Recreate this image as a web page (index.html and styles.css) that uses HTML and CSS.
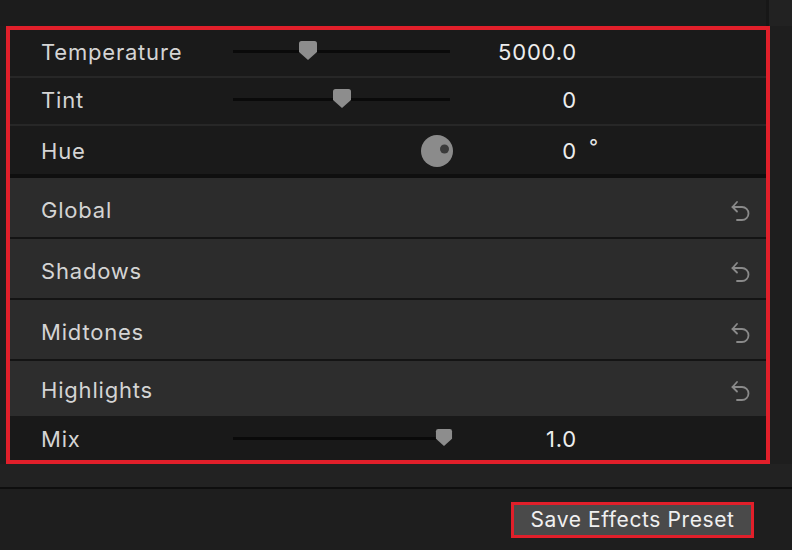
FILE: index.html
```html
<!DOCTYPE html>
<html>
<head>
<meta charset="utf-8">
<link rel="stylesheet" href="styles.css">
</head>
<body>
<div class="page">
  <div class="top">
    <div class="top-main"></div>
    <div class="top-side"></div>
  </div>

  <div class="frame">
    <div class="row param">
      <span class="label">Temperature</span>
      <div class="slider"><div class="track"></div>
        <svg class="thumb" style="left:34.6%" viewBox="0 0 18 19" width="18" height="19"><path d="M2.5 0 H15.5 Q18 0 18 2.5 V11 L9 19 L0 11 V2.5 Q0 0 2.5 0 Z"/></svg>
      </div>
      <span class="value">5000.0</span>
      <span class="unit"></span>
    </div>
    <div class="row param">
      <span class="label">Tint</span>
      <div class="slider"><div class="track"></div>
        <svg class="thumb" style="left:50.2%" viewBox="0 0 18 19" width="18" height="19"><path d="M2.5 0 H15.5 Q18 0 18 2.5 V11 L9 19 L0 11 V2.5 Q0 0 2.5 0 Z"/></svg>
      </div>
      <span class="value">0</span>
      <span class="unit"></span>
    </div>
    <div class="row param last">
      <span class="label">Hue</span>
      <div class="slider dial-cell">
        <svg class="dial" viewBox="0 0 32 32" width="32" height="32"><circle cx="16" cy="16" r="16" fill="#8b8b8b"/><circle cx="23.5" cy="14" r="4.5" fill="#3b3b3b"/></svg>
      </div>
      <span class="value">0</span>
      <span class="unit">°</span>
    </div>

    <div class="row section">
      <span class="label">Global</span>
      <svg class="undo" viewBox="0 0 20 22" width="20" height="22"><path d="M6 3 L1.5 8 L6 12.5"/><path d="M1.5 8 H11 A6.5 6.5 0 0 1 11 21 H6"/></svg>
    </div>
    <div class="row section">
      <span class="label">Shadows</span>
      <svg class="undo" viewBox="0 0 20 22" width="20" height="22"><path d="M6 3 L1.5 8 L6 12.5"/><path d="M1.5 8 H11 A6.5 6.5 0 0 1 11 21 H6"/></svg>
    </div>
    <div class="row section">
      <span class="label">Midtones</span>
      <svg class="undo" viewBox="0 0 20 22" width="20" height="22"><path d="M6 3 L1.5 8 L6 12.5"/><path d="M1.5 8 H11 A6.5 6.5 0 0 1 11 21 H6"/></svg>
    </div>
    <div class="row section hl">
      <span class="label">Highlights</span>
      <svg class="undo" viewBox="0 0 20 22" width="20" height="22"><path d="M6 3 L1.5 8 L6 12.5"/><path d="M1.5 8 H11 A6.5 6.5 0 0 1 11 21 H6"/></svg>
    </div>

    <div class="row param mix">
      <span class="label">Mix</span>
      <div class="slider"><div class="track"></div>
        <svg class="thumb" style="left:97.2%" viewBox="0 0 18 19" width="18" height="17"><path d="M2.5 0 H15.5 Q18 0 18 2.5 V11 L9 19 L0 11 V2.5 Q0 0 2.5 0 Z"/></svg>
      </div>
      <span class="value">1.0</span>
      <span class="unit"></span>
    </div>
  </div>

  <div class="under"></div>

  <div class="footer">
    <button class="preset">Save Effects Preset</button>
  </div>
</div>
</body>
</html>
```

FILE: styles.css
```css
* { box-sizing: border-box; }

html, body {
  margin: 0;
  padding: 0;
  background: #1e1e1e;
  width: 792px;
  height: 550px;
  overflow: hidden;
  font-family: Inter, "Liberation Sans", sans-serif;
}

.page {
  display: flex;
  flex-direction: column;
  height: 550px;
}

.top {
  display: flex;
  height: 26px;
  flex: none;
}

.top-main {
  flex: 1;
  background: #1c1c1c;
}

.top-side {
  width: 26px;
  background: #222222;
  border-left: 3px solid #171717;
}

.frame {
  position: relative;
  z-index: 1;
  flex: none;
  margin-left: 6px;
  width: 764px;
  border: 4px solid #e11f2a;
  background: #1a1a1a;
  display: flex;
  flex-direction: column;
}

.row {
  display: grid;
  align-items: center;
  padding-left: 31px;
  flex: none;
}

.label {
  color: #d4d4d4;
  font-size: 22px;
  letter-spacing: 0.8px;
  line-height: 1;
}

.param {
  grid-template-columns: 192px 217px 127px 1fr;
  height: 48px;
  background: #1a1a1a;
  border-bottom: 2px solid #272727;
  padding-bottom: 2px;
}

.param.last {
  border-bottom: 4px solid #0f0f0f;
  height: 52px;
  padding-bottom: 0;
  padding-top: 1px;
}

.param.mix {
  height: 44px;
  border-bottom: none;
  padding-bottom: 0;
  padding-top: 1px;
  background: #191919;
}

.slider {
  position: relative;
  height: 24px;
}

.track {
  position: absolute;
  left: 0;
  right: 0;
  top: 10px;
  height: 3px;
  background: #0a0a0a;
}

.thumb {
  position: absolute;
  top: 1px;
  transform: translateX(-50%);
  fill: #8d8d8d;
}

.mix .thumb { top: 2px; }

.dial-cell {
  height: 32px;
  display: flex;
  justify-content: flex-end;
  margin-right: -3px;
}

.value {
  justify-self: end;
  color: #ededed;
  font-size: 22px;
  letter-spacing: 0.8px;
  line-height: 1;
}

.unit {
  color: #e6e6e6;
  font-size: 20px;
  padding-left: 12px;
  align-self: start;
  margin-top: 10px;
  line-height: 1;
}

.section {
  grid-template-columns: 1fr auto;
  height: 61px;
  background: #2c2c2c;
  border-bottom: 2px solid #141414;
  padding-right: 15px;
  padding-top: 4px;
}

.section.hl {
  height: 55px;
  border-bottom: none;
  background: #2d2d2d;
  padding-top: 2px;
}

.undo {
  fill: none;
  stroke: #8a8a8a;
  stroke-width: 1.8;
  stroke-linecap: round;
  stroke-linejoin: round;
}

.under {
  height: 25px;
  flex: none;
  background: #222222;
  border-bottom: 2px solid #0e0e0e;
}

.footer {
  flex: 1;
  background: #1e1e1e;
  display: flex;
  justify-content: flex-end;
  align-items: flex-start;
  padding-top: 13px;
  padding-right: 38px;
}

.preset {
  width: 243px;
  height: 36px;
  border: 3px solid #e11f2a;
  background: #4a4a4a;
  color: #f0f0f0;
  font-family: Inter, "Liberation Sans", sans-serif;
  font-size: 21px;
  letter-spacing: 0.6px;
  padding: 0 0 2px 0;
  line-height: 1;
}
```
